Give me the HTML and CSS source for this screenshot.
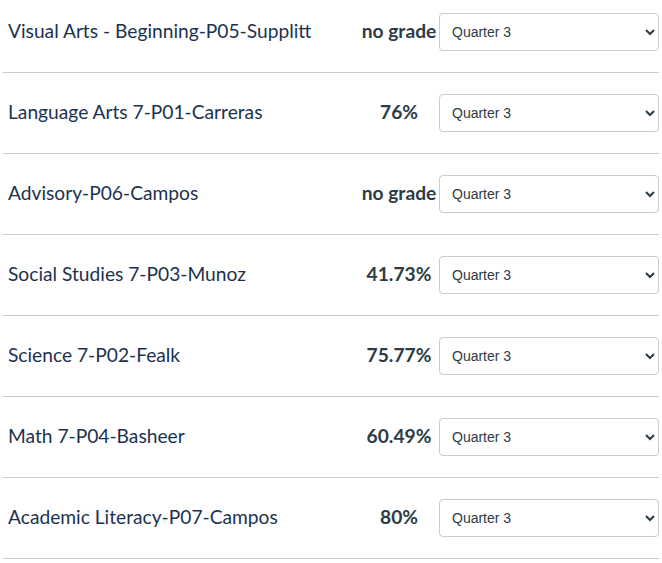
FILE: index.html
```html
<!DOCTYPE html>
<html>
<head>
<meta charset="utf-8">
<link rel="stylesheet" href="styles.css">
</head>
<body>
<div class="list">
  <div class="row"><span class="name">Visual Arts - Beginning-P05-Supplitt</span><span class="grade">no grade</span><select class="period"><option>Quarter 3</option></select></div>
  <div class="row"><span class="name">Language Arts 7-P01-Carreras</span><span class="grade">76%</span><select class="period"><option>Quarter 3</option></select></div>
  <div class="row"><span class="name">Advisory-P06-Campos</span><span class="grade">no grade</span><select class="period"><option>Quarter 3</option></select></div>
  <div class="row"><span class="name">Social Studies 7-P03-Munoz</span><span class="grade">41.73%</span><select class="period"><option>Quarter 3</option></select></div>
  <div class="row"><span class="name">Science 7-P02-Fealk</span><span class="grade">75.77%</span><select class="period"><option>Quarter 3</option></select></div>
  <div class="row"><span class="name">Math 7-P04-Basheer</span><span class="grade">60.49%</span><select class="period"><option>Quarter 3</option></select></div>
  <div class="row"><span class="name">Academic Literacy-P07-Campos</span><span class="grade">80%</span><select class="period"><option>Quarter 3</option></select></div>
</div>
</body>
</html>
```
FILE: styles.css
```css
html, body {
  margin: 0;
  padding: 0;
  background: #ffffff;
}
body {
  font-family: Lato, "Open Sans", sans-serif;
  overflow: hidden;
}
.list {
  margin: -8px 3px 0 3px;
}
.row {
  display: flex;
  align-items: center;
  padding: 21px 0;
  border-bottom: 1px solid #c7cdd1;
}
.name {
  flex: 1;
  padding-left: 5px;
  font-size: 19.2px;
  line-height: 24px;
  margin-bottom: 3px;
  color: #1b3250;
  white-space: nowrap;
}
.grade {
  width: 80px;
  text-align: center;
  font-size: 19.2px;
  line-height: 24px;
  margin-bottom: 3px;
  font-weight: 700;
  color: #2d3b45;
  white-space: nowrap;
}
.period {
  width: 220px;
  height: 38px;
  box-sizing: border-box;
  border: 1px solid #c7cdd1;
  border-radius: 4px;
  background: #ffffff;
  padding: 0 8px 0 8px;
  font-family: "Liberation Sans", Arial, sans-serif;
  font-size: 14px;
  color: #2d3b45;
}
```
